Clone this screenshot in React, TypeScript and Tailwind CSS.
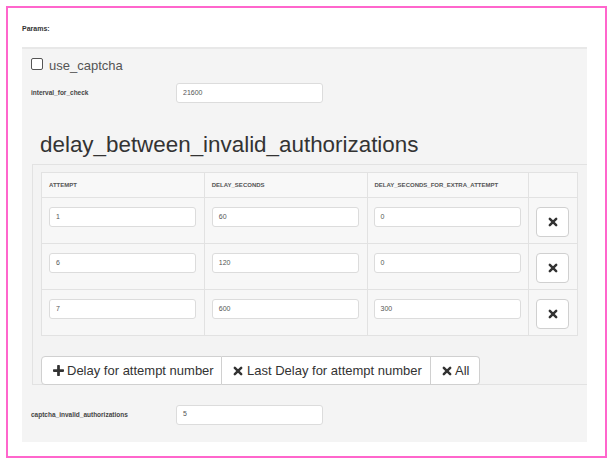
import React from "react";

const rows = [
  { a: "1", d: "60", e: "0" },
  { a: "6", d: "120", e: "0" },
  { a: "7", d: "600", e: "300" },
];

function XIcon({ size = 10 }: { size?: number }) {
  return (
    <svg width={size} height={size} viewBox="0 0 12 12">
      <path d="M2.2 2.2 L9.8 9.8 M9.8 2.2 L2.2 9.8" stroke="#333" strokeWidth="3" strokeLinecap="round" />
    </svg>
  );
}

function PlusIcon({ size = 11 }: { size?: number }) {
  return (
    <svg width={size} height={size} viewBox="0 0 12 12">
      <path d="M6 1.2 V10.8 M1.2 6 H10.8" stroke="#333" strokeWidth="3" strokeLinecap="round" />
    </svg>
  );
}

function Field({ value, w = "w-[147px]" }: { value: string; w?: string }) {
  return (
    <div
      className={`${w} h-[20px] bg-white border border-[#dcdcdc] rounded-[3px] flex items-center pl-[6px] text-[7px] text-[#555]`}
    >
      {value}
    </div>
  );
}

export default function App() {
  return (
    <div
      className="w-[614px] h-[468px] bg-white pt-[6px] pl-[6px]"
      style={{ fontFamily: '"Liberation Sans", Arial, sans-serif' }}
    >
      <div className="w-[601px] h-[452px] border-2 border-[#ff66cc] pl-[14px] pt-[16px]">
        <div className="text-[7px] font-bold text-[#333] leading-[10px]">Params:</div>
        <div className="mt-[13px] w-[565px] h-[395px] bg-[#f4f4f4] border-t-2 border-[#e8e8e8] pl-[9px] pt-[8px]">
          <div className="flex items-center h-[14px]">
            <div className="w-[12px] h-[12px] bg-white border border-[#555] rounded-[2px]" />
            <span className="ml-[6px] mt-[4px] text-[13px] text-[#555] leading-[14px]">use_captcha</span>
          </div>
          <div className="mt-[12px] flex items-center h-[20px]">
            <div className="w-[145px] text-[6.5px] font-bold text-[#444]">interval_for_check</div>
            <Field value="21600" />
          </div>
          <div className="mt-[29px] pl-[9px] text-[22.4px] text-[#333] leading-[26px] h-[30px]">
            delay_between_invalid_authorizations
          </div>
          <div className="mt-[2px] ml-[1px] w-[555px] h-[221px] border-t border-l border-b border-[#e2e2e2] bg-[#f3f3f3] pl-[8px] pt-[7px]">
            <table className="border-collapse w-[537px] bg-[#f7f7f7]">
              <thead>
                <tr className="h-[25px] bg-[#f8f8f8]">
                  <th className="w-[163px] border border-[#e2e2e2] text-left pl-[7px] text-[6px] font-bold text-[#555] uppercase">
                    Attempt
                  </th>
                  <th className="w-[163px] border border-[#e2e2e2] text-left pl-[7px] text-[6px] font-bold text-[#555] uppercase">
                    delay_seconds
                  </th>
                  <th className="w-[162px] border border-[#e2e2e2] text-left pl-[7px] text-[6px] font-bold text-[#555] uppercase">
                    delay_seconds_for_extra_attempt
                  </th>
                  <th className="w-[49px] border border-[#e2e2e2]" />
                </tr>
              </thead>
              <tbody>
                {rows.map((r, i) => (
                  <tr key={i} className="h-[46px]">
                    <td className="border border-[#e2e2e2] align-top pt-[9px] pl-[7px]">
                      <Field value={r.a} />
                    </td>
                    <td className="border border-[#e2e2e2] align-top pt-[9px] pl-[7px]">
                      <Field value={r.d} />
                    </td>
                    <td className="border border-[#e2e2e2] align-top pt-[9px] pl-[6px]">
                      <Field value={r.e} />
                    </td>
                    <td className="border border-[#e2e2e2] align-top pt-[9px] pl-[7px]">
                      <div className="w-[33px] h-[30px] bg-white border border-[#d0d0d0] rounded-[4px] flex items-center justify-center">
                        <XIcon size={10} />
                      </div>
                    </td>
                  </tr>
                ))}
              </tbody>
            </table>
            <div className="mt-[20px] flex h-[29px] text-[13px] text-[#333]">
              <div className="w-[181px] h-full bg-white border border-[#d0d0d0] rounded-l-[4px] flex items-center pl-[11px] gap-[3px]">
                <PlusIcon size={11} />
                <span>Delay for attempt number</span>
              </div>
              <div className="w-[209px] h-full bg-white border border-l-0 border-[#d0d0d0] flex items-center pl-[11px] gap-[4px]">
                <XIcon size={10} />
                <span>Last Delay for attempt number</span>
              </div>
              <div className="w-[49px] h-full bg-white border border-l-0 border-[#d0d0d0] rounded-r-[4px] flex items-center pl-[11px] gap-[3px]">
                <XIcon size={10} />
                <span>All</span>
              </div>
            </div>
          </div>
          <div className="mt-[19px] flex items-center h-[21px]">
            <div className="w-[145px] text-[6.5px] font-bold text-[#444]">captcha_invalid_authorizations</div>
            <Field value="5" />
          </div>
        </div>
      </div>
    </div>
  );
}
